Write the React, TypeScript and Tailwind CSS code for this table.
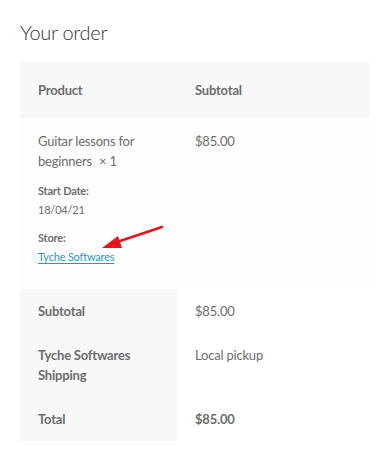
export default function App() {
  const font = { fontFamily: 'Lato, "Open Sans", sans-serif' };

  return (
    <div className="w-[390px] h-[463px] bg-white px-5 pt-[17px] text-[#6d6d6d]" style={font}>
      <h3 className="text-[20px] leading-[30px] font-light text-[#333] tracking-[-0.3px] mb-[15px]">Your order</h3>

      <table className="w-[350px] border-collapse text-[13px] leading-[20px] tracking-[-0.2px]">
        <thead>
          <tr className="bg-[#f8f8f8]">
            <th className="w-[157px] h-[56px] pl-[18px] text-left font-bold">Product</th>
            <th className="h-[56px] pl-[18px] text-left font-bold">Subtotal</th>
          </tr>
        </thead>
        <tbody>
          <tr className="bg-[#fdfdfd]">
            <td className="relative align-top pl-[18px] pr-2 pt-[13px] pb-[23px]">
              <div>
                Guitar lessons for beginners
                <span className="ml-[7px]">×&nbsp;1</span>
              </div>
              <dl className="text-[11px] mt-[10px]">
                <dt className="font-bold leading-[20px]">Start Date:</dt>
                <dd className="leading-[18px]">18/04/21</dd>
                <dt className="font-bold leading-[20px] mt-[9px]">Store:</dt>
                <dd className="leading-[18px]">
                  <a href="#" className="text-[#1b9dc2] underline underline-offset-2">
                    Tyche Softwares
                  </a>
                </dd>
              </dl>

              {/* red pointer over the store link */}
              <svg className="absolute left-[58px] top-[105px]" width="90" height="40" viewBox="0 0 90 40">
                <line x1="84" y1="4" x2="36" y2="20" stroke="#e8141b" strokeWidth="2.5" strokeLinecap="round" />
                <polygon points="24,25 40,13 44,25" fill="#e8141b" />
              </svg>
            </td>
            <td className="align-top pl-[18px] pt-[13px]">$85.00</td>
          </tr>
        </tbody>
        <tfoot>
          <tr>
            <th className="bg-[#f8f8f8] pl-[18px] py-3 text-left font-bold">Subtotal</th>
            <td className="pl-[18px] py-3">$85.00</td>
          </tr>
          <tr>
            <th className="bg-[#f8f8f8] pl-[18px] pr-2 py-3 text-left font-bold">
              Tyche Softwares Shipping
            </th>
            <td className="align-top pl-[18px] py-3">Local pickup</td>
          </tr>
          <tr>
            <th className="bg-[#f8f8f8] pl-[18px] py-3 text-left font-bold">Total</th>
            <td className="pl-[18px] py-3 font-bold">$85.00</td>
          </tr>
        </tfoot>
      </table>
    </div>
  );
}
